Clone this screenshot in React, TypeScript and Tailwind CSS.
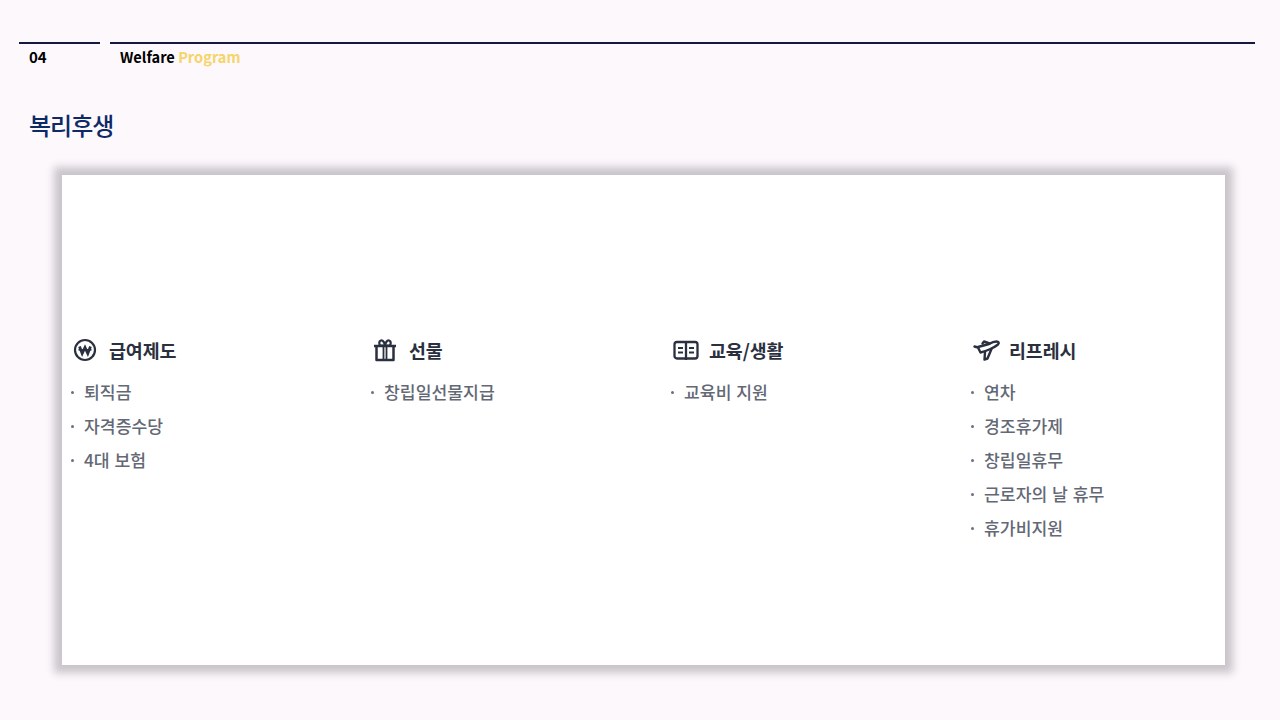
const columns = [
  { title: "급여제도", icon: <WonIcon />, items: ["퇴직금", "자격증수당", "4대 보험"] },
  { title: "선물", icon: <GiftIcon />, items: ["창립일선물지급"] },
  { title: "교육/생활", icon: <BookIcon />, items: ["교육비 지원"] },
  { title: "리프레시", icon: <PlaneIcon />, items: ["연차", "경조휴가제", "창립일휴무", "근로자의 날 휴무", "휴가비지원"] },
];

function WonIcon() {
  return (
    <svg width="24" height="24" viewBox="0 0 24 24" fill="none" stroke="#2b3040" strokeWidth="2.200">
      <circle cx="12" cy="12" r="10" />
      <path d="M6.500 8.500l2.700 7 2.800-6 2.800 6 2.700-7" strokeWidth="2.800" />
      <path d="M5.500 11.800h13" strokeWidth="1.600" />
    </svg>
  );
}

function GiftIcon() {
  return (
    <svg width="24" height="24" viewBox="0 0 24 24" fill="none" stroke="#2b3040" strokeWidth="2.500" strokeLinejoin="round">
      <path d="M1 8h22" />
      <path d="M3.500 8v14h17V8" />
      <path d="M10.500 8v14M13.500 8v14" strokeWidth="1.800" />
      <path d="M12 7.500 8 7.500C6 7.500 5.500 3 8 2.500c2-.4 3.500 2 4 5 .5-3 2-5.400 4-5 2.500.5 2 5 0 5z" strokeWidth="2.200" />
    </svg>
  );
}

function BookIcon() {
  return (
    <svg width="26" height="24" viewBox="0 0 26 24" fill="none" stroke="#2b3040" strokeWidth="2.300">
      <rect x="1.500" y="4" width="23" height="16.500" rx="2.500" />
      <path d="M13 4v18" />
      <path d="M5 10h5M5 14.500h5M16 10h5M16 14.500h5" strokeWidth="2" />
    </svg>
  );
}

function PlaneIcon() {
  return (
    <svg width="28" height="24" viewBox="0 0 28 24" fill="none" stroke="#2b3040" strokeWidth="2.400" strokeLinejoin="round" strokeLinecap="round">
      <path d="M1.500 8.500l3.500 1 2.500 5c5-1 14-5 17.500-8 1.500-1.500.5-3-1.500-3-2.500 0-5 1-7.500 2.500L5 9" />
      <path d="M9.500 5.500 11 3.500l5.500 2" />
      <path d="M18.500 11l-4 9.500-3 1 .5-7.500" />
    </svg>
  );
}

export default function App() {
  return (
    <div className="w-[1280px] h-[720px] overflow-hidden bg-[#fdf8fc] font-['Noto_Sans_CJK_KR','Noto_Sans',sans-serif]">
      <header className="flex gap-[10px] pt-[42px] pl-[19px] pr-[25px]">
        <div className="w-[81px] border-t-2 border-[#14193f] pl-[10px] pt-[3px] text-[15px] leading-[20px] font-bold text-black">04</div>
        <div className="flex-1 border-t-2 border-[#14193f] pl-[10px] pt-[3px] text-[14.6px] leading-[20px] font-bold text-black">
          Welfare <span className="text-[#f5d469]">Program</span>
        </div>
      </header>

      <h1 className="mt-[40px] pl-[29px] text-[24px] leading-[36px] font-medium tracking-[-1px] text-[#0e2a66]">복리후생</h1>

      <main className="mt-[32px] ml-[62px] w-[1163px] h-[490px] bg-white shadow-[0_0_8px_8px_#c9c5ca] pt-[160px] pl-[8px] grid grid-cols-[300px_300px_300px_300px] content-start">
        {columns.map((col) => (
          <section key={col.title}>
            <div className="flex items-center h-[30px]">
              <div className="w-[30px] ml-[3px] flex justify-start">{col.icon}</div>
              <h2 className="ml-[6px] text-[18.400px] leading-[30px] font-bold tracking-[-0.1px] text-[#2b3040]">{col.title}</h2>
            </div>
            <ul className="mt-[10px] flex flex-col">
              {col.items.map((item) => (
                <li key={item} className="flex items-center h-[34px] pl-[1px] text-[17.200px] font-medium text-[#636875] [word-spacing:1px]">
                  <span className="w-[3px] h-[3px] rounded-full bg-[#6b7080] mr-[10px]" />
                  {item}
                </li>
              ))}
            </ul>
          </section>
        ))}
      </main>
    </div>
  );
}
